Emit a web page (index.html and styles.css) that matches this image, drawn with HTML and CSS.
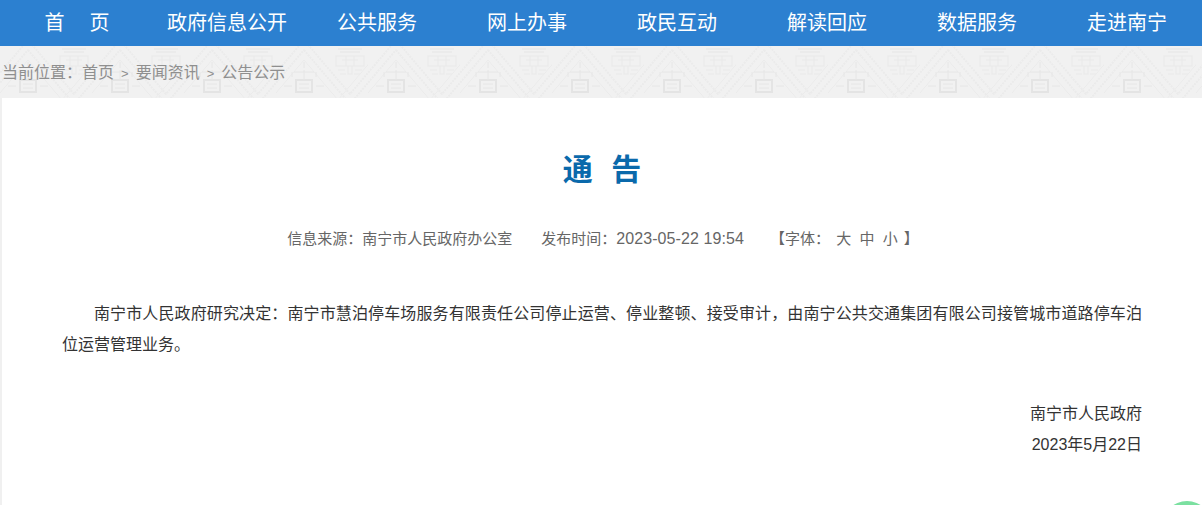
FILE: index.html
```html
<!DOCTYPE html>
<html>
	<head>
		<meta charset="utf-8" />
		<title>通告</title>
		<link rel="stylesheet" href="styles.css">
	</head>

	<body>
		<nav class="nav">
			<ul class="nav-list">
				<li><a href="#" class="wide">首页</a></li>
				<li><a href="#">政府信息公开</a></li>
				<li><a href="#">公共服务</a></li>
				<li><a href="#">网上办事</a></li>
				<li><a href="#">政民互动</a></li>
				<li><a href="#">解读回应</a></li>
				<li><a href="#">数据服务</a></li>
				<li><a href="#">走进南宁</a></li>
			</ul>
		</nav>

		<div class="crumbs">
			当前位置：<a href="#">首页</a><span class="sep">&gt;</span><a href="#">要闻资讯</a><span class="sep">&gt;</span><a href="#">公告公示</a>
		</div>

		<main class="article">
			<h1 class="title">通 告</h1>

			<div class="meta">
				<span class="source">信息来源：南宁市人民政府办公室</span>
				<span class="time">发布时间：<span class="digits">2023-05-22 19:54</span></span>
				<span class="size">【字体： <a href="#">大</a> <a href="#">中</a> <a href="#">小</a> 】</span>
			</div>

			<div class="content">
				<p class="para">南宁市人民政府研究决定：南宁市慧泊停车场服务有限责任公司停止运营、停业整顿、接受审计，由南宁公共交通集团有限公司接管城市道路停车泊位运营管理业务。</p>
				<p class="sign">南宁市人民政府</p>
				<p class="sign">2023年5月22日</p>
			</div>
		</main>

		<div class="float-btn"></div>
	</body>
</html>
```
FILE: styles.css
```css
html, body {
	margin: 0;
	padding: 0;
	height: 505px;
	overflow: hidden;
}

body {
	position: relative;
	background: #f0f0f0;
	font-family: "Liberation Sans", "Noto Sans CJK SC", sans-serif;
	color: #333;
}

a {
	color: inherit;
	text-decoration: none;
}

/* Top navigation */
.nav {
	height: 46px;
	background: #2c80d0;
	padding-left: 2px;
}

.nav-list {
	display: grid;
	grid-template-columns: repeat(8, 150px);
	margin: 0;
	padding: 0;
	list-style: none;
}

.nav-list li {
	text-align: center;
	font-size: 20px;
	line-height: 46px;
	color: #fff;
}

.nav-list .wide {
	letter-spacing: 25px;
	margin-right: -25px;
}

/* Breadcrumb on the patterned band */
.crumbs {
	height: 52px;
	padding: 1px 0 0 2px;
	box-sizing: border-box;
	font-size: 16px;
	line-height: 52px;
	color: #8f8f8f;
	background-color: #f1f1f1;
	background-image: url("data:image/svg+xml,%3Csvg xmlns='http://www.w3.org/2000/svg' width='92' height='52'%3E%3Cg fill='none' stroke='%23ebebeb'%3E%3Cg stroke-dasharray='2 1' stroke-width='2'%3E%3Cpath d='M28 -6 74 48 120 -6M-64 -6 -18 48 28 -6'/%3E%3Cpath d='M28 4 74 58 120 4M-64 4 -18 58 28 4'/%3E%3C/g%3E%3Cpath d='M28 14 62 54M28 14 -6 54M96 14 62 54'/%3E%3Crect x='20' y='34' width='16' height='12' stroke='%23e4e4e4' stroke-width='2'/%3E%3Cpath d='M23 38h10M23 42h10M28 34v-10M28 22v-6M18 26h20M16 26v5M40 26v5M8 40h8M40 40h8' stroke='%23e6e6e6'/%3E%3Cpath d='M62 3h24M64 6h20' stroke-width='2'/%3E%3Cpath d='M60 10h28v10H60zM66 14h16M70 10v10M78 10v10M72 20v8h4v-8M62 24h7M79 24h7M64 28h6M78 28h6' stroke-width='1.5'/%3E%3C/g%3E%3C/svg%3E");
}

.sep {
	margin: 0 7px;
	font-size: 13px;
}

/* Article */
.article {
	margin-left: 2px;
	height: 407px;
	box-sizing: border-box;
	padding: 0 60px;
	background: #fff;
}

.title {
	margin: 0;
	padding-top: 52px;
	text-align: center;
	font-size: 30px;
	line-height: 40px;
	font-weight: bold;
	color: #0a69ab;
	word-spacing: 10px;
}

.meta {
	display: flex;
	justify-content: center;
	margin-top: 37px;
	padding-left: 2px;
	font-size: 15px;
	line-height: 24px;
	color: #666;
}

.source {
	margin-right: 29px;
}

.time {
	margin-right: 26px;
}

.digits {
	font-size: 16px;
	letter-spacing: 0.1px;
}

.size a {
	margin: 0 2px;
}

.content {
	margin-top: 47px;
	font-size: 16px;
	line-height: 31px;
	color: #333;
}

.para {
	margin: 0 0 38px;
	text-indent: 2em;
	text-align: justify;
}

.sign {
	margin: 0;
	text-align: right;
}

/* Floating button, only its top edge shows above the fold */
.float-btn {
	position: absolute;
	left: 1162px;
	bottom: 0;
	width: 40px;
	height: 4px;
	overflow: hidden;
}

.float-btn::before {
	content: "";
	display: block;
	width: 50px;
	height: 50px;
	border-radius: 50%;
	background: #7be0a0;
}
```
